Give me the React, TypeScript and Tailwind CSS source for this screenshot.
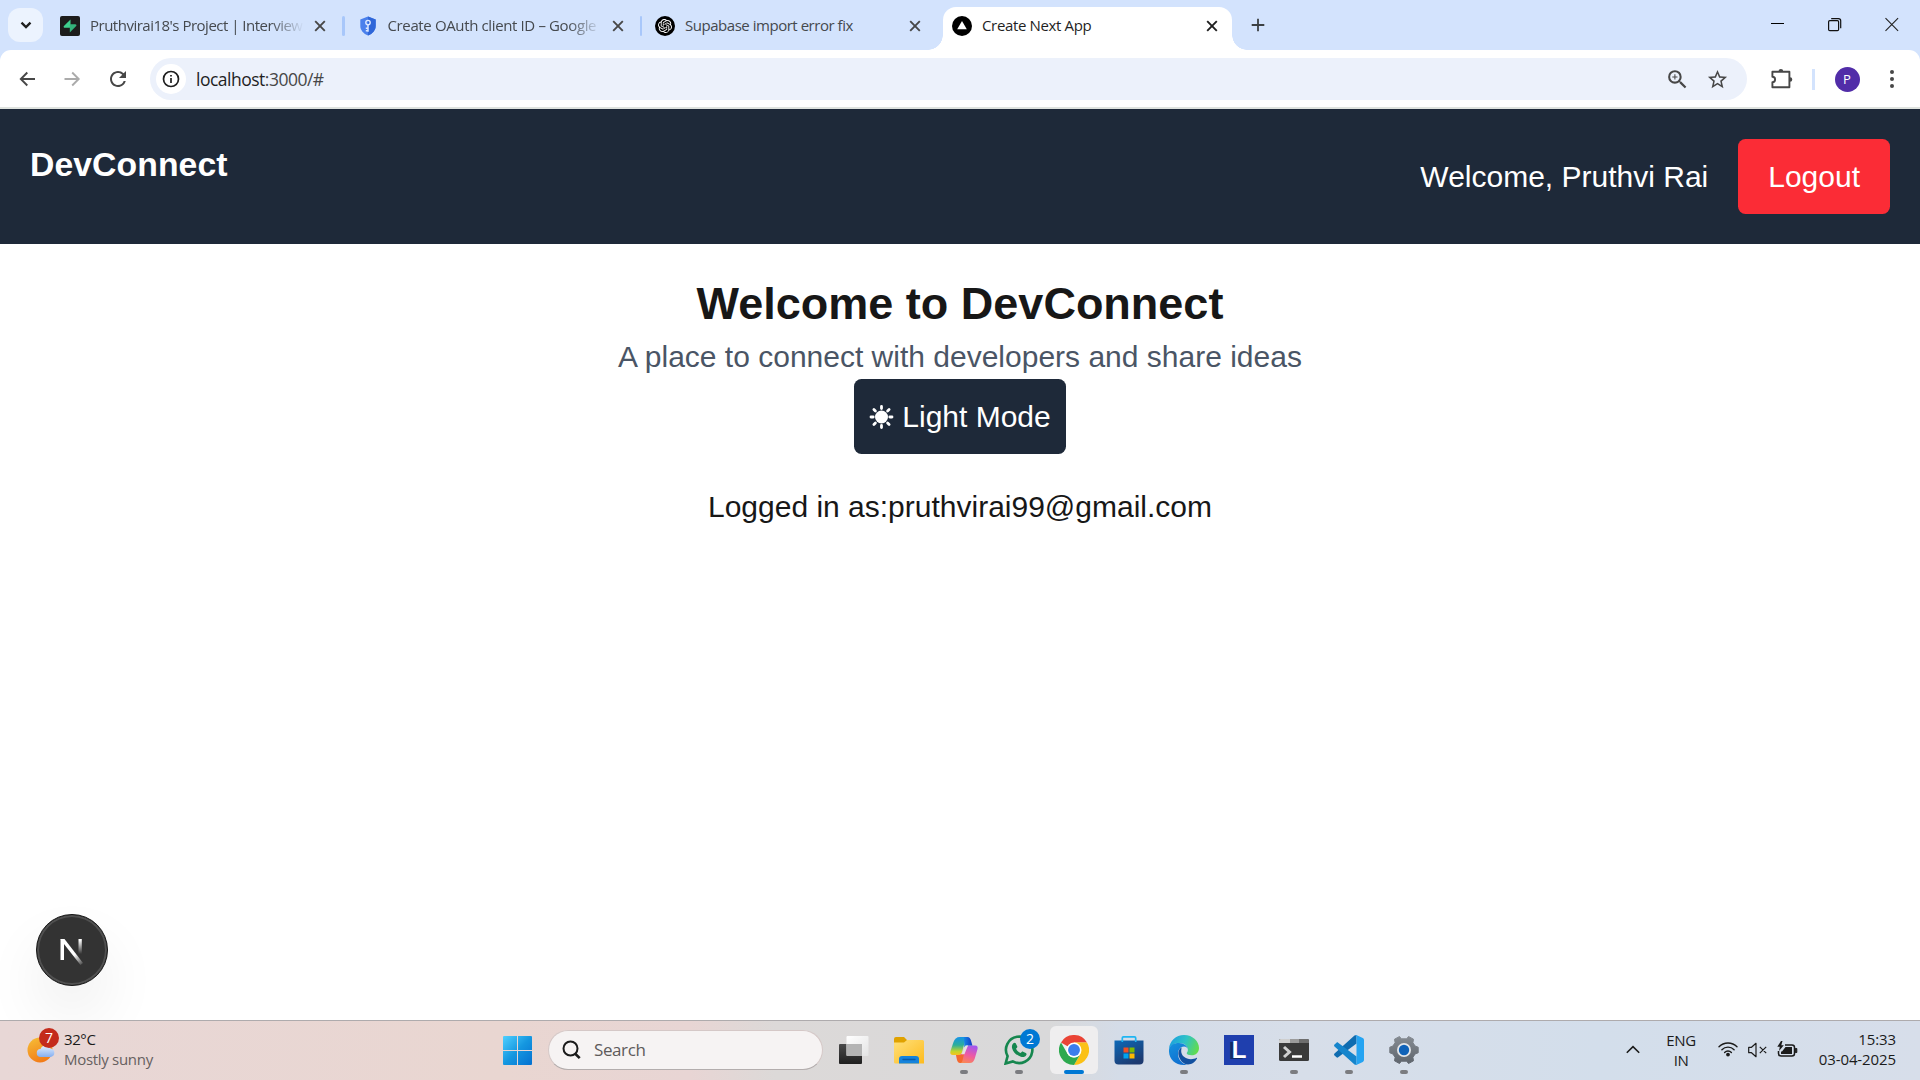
import type { ReactNode } from "react";
import { SiOpenai } from "react-icons/si";
import { MdStarBorder, MdZoomIn, MdRefresh } from "react-icons/md";

function Cross({ color }: { color: string }) {
  return (
    <svg width="20" height="20" viewBox="0 0 20 20" className="shrink-0">
      <path d="M5.2 5.2l9.6 9.6M14.8 5.2l-9.6 9.6" stroke={color} strokeWidth="1.9" />
    </svg>
  );
}

function Tab({ icon, title, tracking }: { icon: ReactNode; title: string; tracking: string }) {
  return (
    <div className="flex h-[43px] w-[297.5px] shrink-0 items-center">
      <div className="flex w-5 shrink-0 justify-center">{icon}</div>
      <div className="ml-[10px] w-[213px] shrink-0">
        <div
          className={
            "-mt-[2px] text-[15px] leading-5 whitespace-nowrap text-[#45494e] [mask-image:linear-gradient(to_right,black_180px,transparent_214px)] " +
            tracking
          }
        >
          {title}
        </div>
      </div>
      <div className="ml-[7px]">
        <Cross color="#474747" />
      </div>
      <div className="ml-[12px] h-5 w-[2.5px] rounded-full bg-[#a8c7fa]" />
    </div>
  );
}

function SupabaseIcon() {
  return (
    <svg width="20" height="20" viewBox="0 0 20 20">
      <rect width="20" height="20" rx="2" fill="#1c1c1c" />
      <path d="M10.5 3.6v8.2H4.800c-1 0-1.500-1-.9-1.800z" fill="#3ecf8e" />
      <path d="M9.800 16.400V8.200h5.500c1 0 1.500 1 .9 1.800z" fill="#34b27b" />
    </svg>
  );
}

function ShieldIcon() {
  return (
    <svg width="16" height="20" viewBox="0 0 16 20">
      <path d="M8 .6l7.700 2.900v6.200c0 4.500-3.200 8-7.700 9.800C3.500 17.700.3 14.200.3 9.700V3.500z" fill="#4a80ec" />
      <path d="M8 .6l7.700 2.900v6.200c0 4.500-3.200 8-7.700 9.800z" fill="#2f66d8" />
      <circle cx="8" cy="6.600" r="2.200" fill="none" stroke="#dce8ff" strokeWidth="1.400" />
      <path d="M8 8.800v7M8 12.200H5.800M8 14.700H5.800" stroke="#dce8ff" strokeWidth="1.500" />
    </svg>
  );
}

function BrowserTabs() {
  return (
    <div className="flex h-[50px] w-full bg-[#d3e3fd]">
      <div className="mt-2 ml-2 flex h-[34px] w-[35px] shrink-0 items-center justify-center rounded-xl bg-[#ecf3fe]">
        <svg width="16" height="16" viewBox="0 0 16 16" fill="none" stroke="#1f1f1f" strokeWidth="2.300">
          <path d="M3.500 5.600L8 10.100l4.500-4.500" />
        </svg>
      </div>
      <div className="ml-[17px] flex h-[50px] w-[883px] shrink-0 pt-[4px]">
        <Tab icon={<SupabaseIcon />} title="Pruthvirai18's Project | Interview" tracking="tracking-[-0.5px]" />
        <Tab icon={<ShieldIcon />} title="Create OAuth client ID – Google" tracking="tracking-[-0.37px]" />
        <div className="flex h-[43px] w-[280px] items-center">
          <div className="flex size-5 shrink-0 items-center justify-center rounded-full bg-black">
            <SiOpenai size={14} color="#fff" />
          </div>
          <div className="-mt-[2px] ml-[10px] w-[210px] whitespace-nowrap text-[15px] leading-5 tracking-[-0.47px] text-[#45494e]">
            Supabase import error fix
          </div>
          <div className="ml-[10px]">
            <Cross color="#474747" />
          </div>
        </div>
      </div>
      <div className="-ml-[15px] flex h-[50px] w-[319px] shrink-0 items-end">
        <div className="h-[15px] w-[15px] bg-[radial-gradient(circle_at_0_0,transparent_14.500px,white_15px)]" />
        <div className="flex h-[43px] w-[289px] items-center rounded-t-[13px] bg-white pb-[6px] pl-[9px]">
          <svg width="20" height="20" viewBox="0 0 20 20">
            <circle cx="10" cy="10" r="10" fill="#000" />
            <path d="M10 5l4.800 8.300H5.200z" fill="#fff" />
          </svg>
          <div className="-mt-[1px] ml-[10px] w-[220px] whitespace-nowrap text-[15px] leading-5 tracking-[-0.35px] text-[#1f1f1f]">
            Create Next App
          </div>
          <Cross color="#1f1f1f" />
        </div>
        <div className="h-[15px] w-[15px] bg-[radial-gradient(circle_at_100%_0,transparent_14.500px,white_15px)]" />
      </div>
      <svg width="16" height="16" viewBox="0 0 16 16" className="mt-[17px] ml-[3px]" stroke="#3c4043" strokeWidth="1.800">
        <path d="M8 1.700v12.600M1.700 8h12.600" />
      </svg>
      <div className="mt-[17px] mr-[21px] ml-auto flex items-start gap-[43px]">
        <svg width="14" height="15" viewBox="0 0 14 15">
          <path d="M0 6.500h13" stroke="#000" />
        </svg>
        <svg width="14" height="15" viewBox="0 0 14 15" fill="none" stroke="#111" strokeWidth="1.200">
          <rect x=".6" y="3.600" width="10" height="10" rx="1.200" />
          <path d="M3.200 1.600h7.300a2.200 2.200 0 0 1 2.200 2.200v7.500" />
        </svg>
        <svg width="14" height="15" viewBox="0 0 14 15" stroke="#222" strokeWidth="1.100">
          <path d="M.5 1.200l12.600 12.600M13.100 1.200L.5 13.800" />
        </svg>
      </div>
    </div>
  );
}

function Toolbar() {
  return (
    <div className="h-[59px] bg-[#d3e3fd]">
      <div className="flex h-[59px] rounded-t-[11px] border-b-2 border-[#dfe3df] bg-white pt-2">
        <div className="flex h-[42px] w-[150px] shrink-0 items-center">
          <svg width="20" height="20" viewBox="0 0 20 20" fill="none" stroke="#474747" strokeWidth="1.900" className="ml-[17px]">
            <path d="M18 10H4M10.300 3.500L3.800 10l6.500 6.500" />
          </svg>
          <svg width="20" height="20" viewBox="0 0 20 20" fill="none" stroke="#ababab" strokeWidth="1.900" className="ml-[25px]">
            <path d="M2.500 10h14M10.200 3.500l6.500 6.500-6.500 6.500" />
          </svg>
          <MdRefresh size={24} color="#474747" className="ml-[24px]" />
        </div>
        <div className="flex h-[42px] w-[1597px] shrink-0 items-center rounded-full bg-[#ecf1fb] pl-[6px]">
          <div className="flex size-[30px] items-center justify-center rounded-full bg-white">
            <svg width="18" height="18" viewBox="0 0 18 18" fill="none" stroke="#1f1f1f">
              <circle cx="9" cy="9" r="7.500" strokeWidth="1.700" />
              <path d="M9 8v5M9 4.900v1.700" strokeWidth="1.700" />
            </svg>
          </div>
          <div className="ml-[10px] text-[17.500px] leading-6 tracking-[-0.5px] text-[#474747]">
            <span className="text-[#1f1f1f]">localhost</span>:3000/#
          </div>
          <MdZoomIn size={25} color="#474747" className="ml-auto" />
          <MdStarBorder size={23} color="#474747" className="mr-[18px] ml-[16px]" />
        </div>
        <div className="flex h-[42px] items-center">
          <svg width="24" height="24" viewBox="0 0 24 24" className="-mt-[2px] ml-[22px]">
            <path
              d="M3.400 5.700h17v15.600h-17v-5.100c1.600 0 2.700-1.200 2.700-2.700s-1.100-2.700-2.700-2.700z"
              fill="none"
              stroke="#474747"
              strokeWidth="1.900"
              strokeLinejoin="round"
            />
            <path d="M9.600 5.200a2.300 2.300 0 0 1 4.600 0zM21 11.200a2.300 2.300 0 0 1 0 4.600z" fill="#474747" />
          </svg>
          <div className="ml-[19px] h-[21px] w-[2.500px] bg-[#d3e3fd]" />
          <div className="ml-[20px] flex size-[25px] items-center justify-center rounded-full bg-[#512da8] text-[13px] leading-none text-white">
            P
          </div>
          <svg width="6" height="20" viewBox="0 0 6 20" fill="#474747" className="ml-[29px]">
            <circle cx="3" cy="3" r="2" />
            <circle cx="3" cy="10" r="2" />
            <circle cx="3" cy="17" r="2" />
          </svg>
        </div>
      </div>
    </div>
  );
}

function SunIcon() {
  return (
    <svg width="26" height="26" viewBox="0 0 26 26" stroke="#fff" strokeWidth="2.800" strokeLinecap="round">
      <circle cx="12.500" cy="13" r="6.500" fill="#fff" stroke="none" />
      <path d="M12.500 2.500v2M12.500 21.500v2M2 13h2.200M20.800 13H23M4.900 5.400l1.500 1.500M18.600 19.100l1.500 1.500M4.900 20.600l1.500-1.500M18.600 6.900l1.500-1.500" />
    </svg>
  );
}

function AppPage() {
  return (
    <div className="flex h-[911px] flex-col overflow-hidden bg-white font-['Liberation_Sans',Arial,sans-serif] text-[30px] leading-[45px] text-[#171717]">
      <header className="flex h-[135px] shrink-0 justify-between bg-[#1e2939] p-[30px] text-white">
        <h1 className="-mt-px text-[33.750px] leading-[52.500px] font-bold tracking-[0.06px]">DevConnect</h1>
        <div className="flex items-center gap-[30px]">
          <span>Welcome, Pruthvi Rai</span>
          <button className="rounded-[7.500px] bg-[#fb2c36] px-[30px] py-[15px]">Logout</button>
        </div>
      </header>
      <main className="flex flex-col items-center pt-[30px]">
        <h2 className="text-[45px] leading-[60px] font-bold">Welcome to DevConnect</h2>
        <p className="text-[#4a5565]">A place to connect with developers and share ideas</p>
        <button className="flex h-[75px] w-[212px] items-center justify-center gap-[7px] rounded-[7.500px] bg-[#1e2939] whitespace-nowrap text-white">
          <SunIcon />
          Light Mode
        </button>
        <p className="mt-[30px]">Logged in as:pruthvirai99@gmail.com</p>
      </main>
      <div className="mt-auto mb-[34px] ml-[36px] flex size-[72px] shrink-0 items-center justify-center rounded-full border-[1.500px] border-[#171717] bg-[#333] shadow-[inset_0_0_0_2px_#505050,0_30px_60px_rgba(0,0,0,0.07)]">
        <svg width="30" height="34" viewBox="0 0 30 34" fill="none">
          <defs>
            <linearGradient id="nd" x1="17" y1="22" x2="26" y2="33" gradientUnits="userSpaceOnUse">
              <stop stopColor="#fff" />
              <stop offset="1" stopColor="#fff" stopOpacity="0" />
            </linearGradient>
            <linearGradient id="nv" x1="0" y1="7" x2="0" y2="21" gradientUnits="userSpaceOnUse">
              <stop stopColor="#fff" />
              <stop offset="1" stopColor="#fff" stopOpacity="0" />
            </linearGradient>
          </defs>
          <path d="M3.500 6H7v21H3.500z" fill="#fff" />
          <path d="M3.500 6h4l18.500 24-2.500 2L5 8.500z" fill="url(#nd)" />
          <path d="M21.500 6h3.300v15h-3.300z" fill="url(#nv)" />
        </svg>
      </div>
    </div>
  );
}

function AppCell({ children, running }: { children: ReactNode; running?: boolean }) {
  return (
    <div className="flex h-[59px] w-[55px] shrink-0 flex-col items-center pt-[14px]">
      <div className="h-[30px]">{children}</div>
      {running && <div className="mt-[5px] h-1 w-2 rounded-full bg-[#7b7c80]" />}
    </div>
  );
}

function TaskViewIcon() {
  return (
    <svg width="30" height="30" viewBox="0 0 30 30">
      <defs>
        <linearGradient id="tv" x1="0" y1="0" x2="0" y2="1">
          <stop stopColor="#4a4a4a" />
          <stop offset="1" stopColor="#1f1f1f" />
        </linearGradient>
        <linearGradient id="tw" x1="0" y1="0" x2="1" y2="1">
          <stop stopColor="#fff" />
          <stop offset="1" stopColor="#e4e4e4" />
        </linearGradient>
      </defs>
      <rect x="0" y="9" width="23" height="20" rx="1" fill="url(#tv)" />
      <rect x="7.500" y="1" width="22" height="20" rx="1" fill="url(#tw)" />
      <path d="M7.500 9H23v12H8.500a1 1 0 0 1-1-1z" fill="#b4b4b4" />
    </svg>
  );
}

function ExplorerIcon() {
  return (
    <svg width="30" height="30" viewBox="0 0 30 30">
      <defs>
        <linearGradient id="fe" x1="0" y1="0" x2="1" y2="1">
          <stop stopColor="#ffe07a" />
          <stop offset="1" stopColor="#fdbb1e" />
        </linearGradient>
      </defs>
      <path d="M0 4a2 2 0 0 1 2-2h8l3 3h15v8H0z" fill="#e0a200" />
      <path d="M0 7.500h10L13 5h15.500A1.500 1.500 0 0 1 30 6.500v22H1.500A1.500 1.500 0 0 1 0 27z" fill="url(#fe)" />
      <path d="M5 28.500v-4.500a3 3 0 0 1 3-3h14a3 3 0 0 1 3 3v4.500z" fill="#1583dc" />
      <path d="M9 24.500h12" stroke="#0a5aa8" strokeWidth="1.300" strokeLinecap="round" />
    </svg>
  );
}

function CopilotIcon() {
  return (
    <svg width="30" height="30" viewBox="0 0 30 30">
      <defs>
        <linearGradient id="ca" x1="0" y1="0" x2="0" y2="1">
          <stop stopColor="#1593e8" />
          <stop offset=".45" stopColor="#2cae9b" />
          <stop offset=".8" stopColor="#c3d52a" />
          <stop offset="1" stopColor="#f6c21e" />
        </linearGradient>
        <linearGradient id="cb" x1=".7" y1="0" x2=".3" y2="1">
          <stop stopColor="#a456ee" />
          <stop offset=".5" stopColor="#ee5aa4" />
          <stop offset="1" stopColor="#fb8c4e" />
        </linearGradient>
        <linearGradient id="cc" x1="0" y1="0" x2="1" y2="0">
          <stop stopColor="#1386e6" />
          <stop offset="1" stopColor="#1539c4" />
        </linearGradient>
      </defs>
      <path d="M7 19h6l6-8.500h7c2.300 0 3.100 1.700 2.500 3.700l-2.800 9.600c-.9 2.800-2.400 4.200-4.900 4.200H11z" fill="url(#cb)" />
      <path d="M7 20h4.500l3.500-1-1.500 6.500c-.5 2-1.500 2.500-2.500 2.500-2.400 0-3.200-3-4-8z" fill="#f4682f" />
      <path d="M16 2h-5C7.500 2 5.500 4 4.500 7l-3 9c-.8 2.600.3 4 2.500 4h5.500c2 0 3-1 3.600-3L17 2z" fill="url(#ca)" />
      <path d="M15 2h3.500c2 0 2.800 1.400 3.400 3.200l1.500 5.300h-4.400c-1.700 0-2.900.6-3.700 1.800z" fill="url(#cc)" />
      <path d="M16.500 10.500H19l-3.600 8.700H12.700z" fill="#e6e2e4" />
    </svg>
  );
}

function WhatsappIcon() {
  return (
    <svg width="30" height="30" viewBox="0 0 30 30">
      <path
        d="M1.600 28.500l2-7.300a13.200 13.200 0 1 1 5.200 5.200z"
        fill="none"
        stroke="#16874f"
        strokeWidth="2.600"
        strokeLinejoin="miter"
      />
      <path
        d="M9.400 8.300c.6-.7 1.900-.7 2.300 0l1.500 3c.3.6.1 1-.3 1.500l-.9 1c1 2 2.400 3.300 4.500 4.300l1.200-1.200c.4-.4.9-.5 1.400-.2l2.700 1.400c.8.400.9 1.200.5 2-1 2-3.200 2.400-5.400 1.700-4.400-1.400-7.700-4.700-8.800-8.600-.5-1.900.1-3.700 1.300-4.900z"
        fill="#16874f"
      />
    </svg>
  );
}

function Badge({ children, tone }: { children: string; tone: string }) {
  return (
    <div className={"absolute flex size-5 items-center justify-center rounded-full text-[14px] leading-none text-white " + tone}>
      {children}
    </div>
  );
}

function ChromeIcon() {
  return (
    <svg width="30" height="30" viewBox="0 0 48 48">
      <path d="M24 24L3.200 12A24 24 0 0 1 44.800 12H24z" fill="#ea4335" />
      <path d="M24 12h20.800A24 24 0 0 1 24 48l10.400-18z" fill="#fbc116" />
      <path d="M3.200 12L13.600 30A12 12 0 0 0 34.400 30L24 48A24 24 0 0 1 3.200 12z" fill="#2da94f" />
      <circle cx="24" cy="24" r="12" fill="#fff" />
      <circle cx="24" cy="24" r="9.500" fill="#3b7ded" />
    </svg>
  );
}

function StoreIcon() {
  return (
    <svg width="30" height="30" viewBox="0 0 30 30">
      <defs>
        <linearGradient id="st" x1="0" y1="0" x2=".6" y2="1">
          <stop stopColor="#0d69b8" />
          <stop offset="1" stopColor="#1d3a70" />
        </linearGradient>
      </defs>
      <path d="M.5 5.500h29v20a4 4 0 0 1-4 4h-21a4 4 0 0 1-4-4z" fill="url(#st)" />
      <path d="M8.300 7V3a1.200 1.200 0 0 1 1.200-1.200h11A1.200 1.200 0 0 1 21.700 3v4" fill="none" stroke="#1fb5f2" strokeWidth="1.700" />
      <path d="M9.500 12.500h5v5h-5z" fill="#f25022" />
      <path d="M15.500 12.500h5v5h-5z" fill="#7fba00" />
      <path d="M9.500 18.500h5v5h-5z" fill="#00a4ef" />
      <path d="M15.500 18.500h5v5h-5z" fill="#ffb900" />
    </svg>
  );
}

function EdgeIcon() {
  return (
    <svg width="30" height="30" viewBox="0 0 30 30">
      <defs>
        <linearGradient id="ea" x1="0" y1=".3" x2="1" y2=".6">
          <stop stopColor="#1b9fe0" />
          <stop offset=".5" stopColor="#2fc3c6" />
          <stop offset="1" stopColor="#63dc4c" />
        </linearGradient>
        <linearGradient id="eb" x1="0" y1="0" x2=".5" y2="1">
          <stop stopColor="#1592de" />
          <stop offset="1" stopColor="#0f6fd0" />
        </linearGradient>
      </defs>
      <path d="M0 14C.5 6 7 0 15 0c9 0 15 6.500 15 13 0 4.500-3.200 7.300-7.300 7.300-3 0-5-1-5-2 0-.8 1.200-1.200 1.200-3.500 0-3.500-3.500-6.800-8.200-6.800C5 8 1 11 0 14z" fill="url(#ea)" />
      <path d="M0 15C.3 10.500 4.500 8 10 8c4.800 0 8.900 3 8.900 6.800 0-1.800-1.700-3.300-3.900-3.300-3.500 0-6 3.300-6 7.500C9 24 13 29 18 29.700 7 31.500-.5 24 0 15z" fill="url(#eb)" />
      <path d="M12.500 12.200C9.500 14.500 9 17 9.500 20c1 5 5 9.500 9.500 9.500 4 0 7.500-3 9-6 .2-.6-.2-.8-.7-.5-1.300.7-3 1.200-5.300 1.200-5.500 0-9.800-3.700-9.800-8 0-1.700.4-3.200.3-4z" fill="#12509f" />
    </svg>
  );
}

function TerminalIcon() {
  return (
    <svg width="30" height="30" viewBox="0 0 30 30">
      <rect y="4" width="30" height="22" rx="1.500" fill="#3a3a3a" />
      <path d="M0 8V5.500A1.500 1.500 0 0 1 1.500 4H11v4z" fill="#cfcfcf" />
      <path d="M11 4h9v4h-9z" fill="#9b9b9b" />
      <path d="M20 4h8.500A1.500 1.500 0 0 1 30 5.500V8H20z" fill="#6e6e6e" />
      <path d="M5 12l5.500 5L5 22" fill="none" stroke="#d0d0d0" strokeWidth="3" />
      <path d="M13 21.500h10" stroke="#fff" strokeWidth="2.500" />
    </svg>
  );
}

function CodeIcon() {
  return (
    <svg width="30" height="30" viewBox="0 0 30 30">
      <path d="M22.500 0v8.500L4.200 22.300c-.6.500-1.200.5-1.700 0L.5 20.500c-.6-.6-.6-1.300 0-1.900L20.500.6z" fill="#0f6cb0" />
      <path d="M22.500 30v-8.500L4.200 7.700c-.6-.5-1.200-.5-1.700 0L.5 9.500c-.6.6-.6 1.300 0 1.900l20 18z" fill="#1685cc" />
      <path d="M20.500.6c.7-.7 1.400-.7 2.300-.4l6 2.900c.8.4 1.200 1 1.200 1.800v20.200c0 .8-.4 1.400-1.200 1.800l-6 2.900c-.9.3-1.600.3-2.300-.4 1 .7 2 .2 2-1V1.600c0-1.200-1-1.700-2-1z" fill="#25a4f2" />
    </svg>
  );
}

function SettingsIcon() {
  return (
    <svg width="30" height="30" viewBox="0 0 30 30">
      <defs>
        <linearGradient id="sg" x1="0" y1="0" x2="0" y2="1">
          <stop stopColor="#858b92" />
          <stop offset="1" stopColor="#5f656d" />
        </linearGradient>
      </defs>
      <path
        d="M10.500 1.500l1.800 2.300h5.400l1.800-2.300 5 2.700-.6 3.500 2.300 3.400 3 1.100v5.600l-3 1.100-2.300 3.400.6 3.500-5 2.700-1.800-2.300h-5.400l-1.800 2.300-5-2.700.6-3.500-2.300-3.400-3-1.100v-5.600l3-1.100 2.300-3.400-.6-3.500z"
        fill="url(#sg)"
        stroke="url(#sg)"
        strokeWidth="1"
        strokeLinejoin="round"
      />
      <circle cx="15" cy="15" r="7" fill="#e3e6ea" />
      <circle cx="15" cy="15" r="5.200" fill="#0f62b8" />
    </svg>
  );
}

function Weather() {
  return (
    <div className="flex w-[503px] shrink-0 pl-[27px]">
      <div className="relative mt-[16px] h-[30px] w-[30px]">
        <svg width="30" height="30" viewBox="0 0 30 30">
          <defs>
            <linearGradient id="su" x1=".2" y1="0" x2=".6" y2="1">
              <stop stopColor="#f6bb35" />
              <stop offset="1" stopColor="#f27a18" />
            </linearGradient>
            <linearGradient id="cl" x1="0" y1="0" x2="0" y2="1">
              <stop stopColor="#e3efff" />
              <stop offset="1" stopColor="#86aff0" />
            </linearGradient>
          </defs>
          <circle cx="13" cy="13" r="12.500" fill="url(#su)" />
          <path d="M14 20a4 4 0 0 1-.5-8 5.500 5.500 0 0 1 10-.5 4.300 4.300 0 0 1 .3 8.500z" fill="url(#cl)" />
        </svg>
        <Badge tone="left-[12px] -top-[9px] bg-[#c42b1c]">7</Badge>
      </div>
      <div className="mt-[8px] ml-[7px] text-[15px] leading-5">
        <div className="tracking-[-0.4px] text-[#1b1b1b]">32°C</div>
        <div className="tracking-[-0.3px] text-[#66605f]">Mostly sunny</div>
      </div>
    </div>
  );
}

function Tray() {
  return (
    <div className="mr-[24px] ml-auto flex items-start text-[15px] leading-5 text-[#1b1b1b]">
      <svg width="14" height="9" viewBox="0 0 14 9" className="mt-[24px]" fill="none" stroke="#1b1b1b" strokeWidth="1.600">
        <path d="M.8 7.800L7 1.600l6.200 6.200" />
      </svg>
      <div className="mt-[9px] ml-[25px] w-[32px] text-center tracking-[-0.4px]">
        <div className="h-5">ENG</div>
        <div>IN</div>
      </div>
      <svg width="20" height="16" viewBox="0 0 20 16" className="mt-[20px] ml-[21px]" fill="none" stroke="#1b1b1b" strokeWidth="1.400" strokeLinecap="round">
        <path d="M1 5.800a12.500 12.500 0 0 1 18 0M3.900 8.700a8.500 8.500 0 0 1 12.200 0M6.600 11.400a4.800 4.800 0 0 1 6.800 0" />
        <circle cx="10" cy="13.600" r="1.200" fill="#1b1b1b" />
      </svg>
      <svg width="20" height="16" viewBox="0 0 20 16" className="mt-[21px] ml-[10px]" fill="none" stroke="#1b1b1b" strokeWidth="1.200" strokeLinejoin="round">
        <path d="M.7 5.300h2.800L8 1.300v13.400l-4.500-4H.7zM11.800 4.800l6.400 6.400M18.200 4.800l-6.400 6.400" />
      </svg>
      <svg width="21" height="17" viewBox="0 0 21 17" className="mt-[20px] ml-[9px]">
        <path d="M8 4h7a2.500 2.500 0 0 1 2.500 2.500v6a2.500 2.500 0 0 1-2.500 2.500H4a2.500 2.500 0 0 1-2.500-2.500V10" fill="none" stroke="#1b1b1b" strokeWidth="1.500" />
        <path d="M18.300 7.500h1.500v4h-1.500z" fill="#1b1b1b" stroke="#1b1b1b" />
        <path d="M8.500 6H15v7H4v-2.500h1z" fill="#1b1b1b" />
        <path d="M4 0L.3 5.800h2.500L2 10l4.800-5.800H4.300L5.500 0z" fill="#1b1b1b" />
      </svg>
      <div className="mt-[8px] ml-[19px] w-[79px] text-right tracking-[-0.1px] whitespace-nowrap">
        <div className="h-5">15:33</div>
        <div>03-04-2025</div>
      </div>
    </div>
  );
}

function Taskbar() {
  return (
    <div className="flex h-[60px] border-t border-[#aeabad] bg-[linear-gradient(90deg,#e8d7d6_0px,#e9d6d1_500px,#e8d5d4_690px,#dcd9d8_775px,#d9d9da_1050px,#d4dce8_1120px,#d7dee9_1300px,#d3deeb_1600px,#d7deea_1920px)]">
      <Weather />
      <svg width="29" height="29" viewBox="0 0 29 29" className="mt-[15px] shrink-0">
        <defs>
          <linearGradient id="win" x1="0" y1="0" x2="29" y2="29" gradientUnits="userSpaceOnUse">
            <stop stopColor="#4fd0ff" />
            <stop offset=".5" stopColor="#1597e0" />
            <stop offset="1" stopColor="#0470d0" />
          </linearGradient>
        </defs>
        <path d="M1 0h13v14H0V1a1 1 0 0 1 1-1zM15 0h13a1 1 0 0 1 1 1v13H15zM0 15h14v14H1a1 1 0 0 1-1-1zM15 15h14v13a1 1 0 0 1-1 1H15z" fill="url(#win)" />
      </svg>
      <div className="mt-[9px] ml-[16px] flex h-[40px] w-[275px] shrink-0 items-center rounded-full border border-[#d5c8c7] border-b-[#b3adad] bg-[#f6f3f3] pl-[13px]">
        <svg width="19" height="20" viewBox="0 0 19 20" fill="none" stroke="#1b1b1b">
          <circle cx="8.500" cy="8.500" r="7" strokeWidth="2" />
          <path d="M13 13.500l4.700 4.700" strokeWidth="2.600" />
        </svg>
        <span className="ml-[13px] text-[17px] leading-5 tracking-[-0.4px] text-[#5e5b5b]">Search</span>
      </div>
      <div className="ml-[3.500px] flex">
        <AppCell>
          <TaskViewIcon />
        </AppCell>
        <AppCell>
          <ExplorerIcon />
        </AppCell>
        <AppCell running>
          <CopilotIcon />
        </AppCell>
        <AppCell running>
          <div className="relative">
            <WhatsappIcon />
            <Badge tone="left-[16px] -top-[6px] bg-[#0078d4]">2</Badge>
          </div>
        </AppCell>
        <div className="flex h-[59px] w-[55px] shrink-0 justify-center pt-[5px]">
          <div className="flex h-12 w-12 flex-col items-center rounded-md bg-[#efeeef] pt-[9px]">
            <ChromeIcon />
            <div className="mt-[5px] h-1 w-5 rounded-full bg-[#0078d4]" />
          </div>
        </div>
        <AppCell>
          <StoreIcon />
        </AppCell>
        <AppCell running>
          <EdgeIcon />
        </AppCell>
        <AppCell>
          <div className="flex size-[30px] items-center justify-center bg-[#1f3fae] font-['Liberation_Sans',Arial,sans-serif] text-[24px] leading-none font-bold text-white [text-shadow:-3px_1px_0_#102a68]">
            L
          </div>
        </AppCell>
        <AppCell running>
          <TerminalIcon />
        </AppCell>
        <AppCell running>
          <CodeIcon />
        </AppCell>
        <AppCell running>
          <SettingsIcon />
        </AppCell>
      </div>
      <Tray />
    </div>
  );
}

export default function App() {
  return (
    <div className="flex h-[1080px] w-[1920px] flex-col overflow-hidden font-['Open_Sans','Noto_Sans',sans-serif]">
      <BrowserTabs />
      <Toolbar />
      <AppPage />
      <Taskbar />
    </div>
  );
}
